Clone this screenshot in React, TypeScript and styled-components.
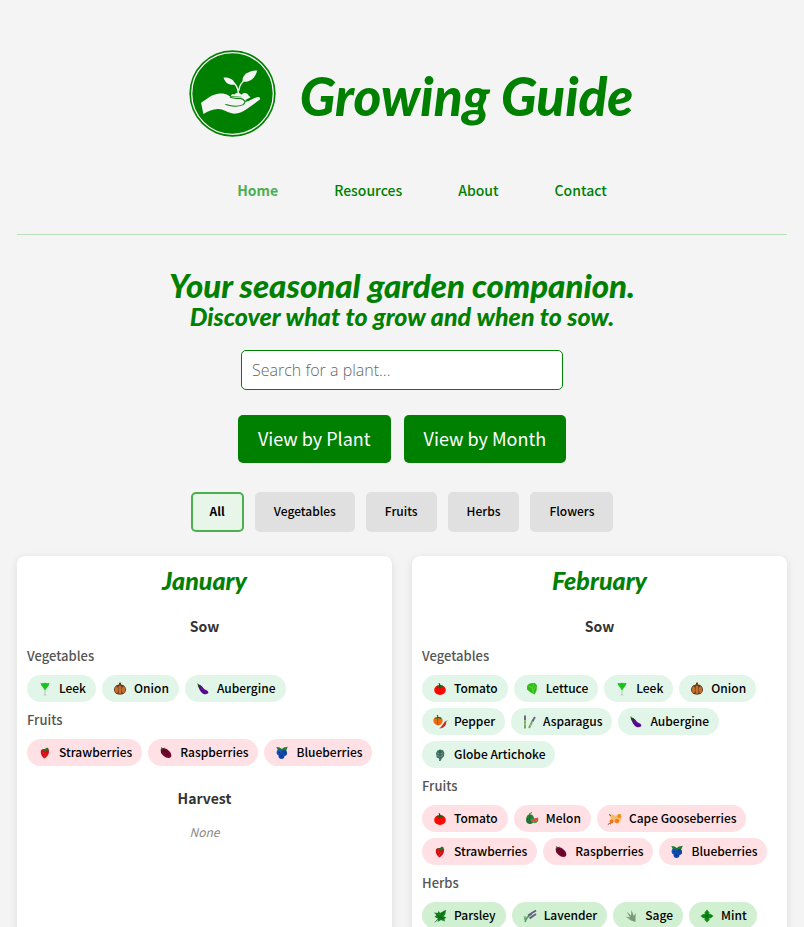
import React from 'react';
import styled, { createGlobalStyle } from 'styled-components';

const body = `'Noto Sans CJK SC', 'Noto Sans CJK JP', 'Noto Sans', sans-serif`;
const display = `Lato, 'Open Sans', sans-serif`;

const GlobalStyle = createGlobalStyle`
  *, *::before, *::after { box-sizing: border-box; }
  body { margin: 0; background: #f4f4f4; color: #000; font-family: ${body}; }
  h1, h2, h3, h4, h5, p, ul { margin: 0; padding: 0; }
`;

const Page = styled.div`
  display: flex;
  flex-direction: column;
  padding: 50px 17px 20px;
`;

const Header = styled.header`
  display: flex;
  flex-direction: column;
  align-items: center;
  border-bottom: 1px solid #b9dfba;
  padding-bottom: 33px;
`;

const Brand = styled.div`
  display: flex;
  align-items: center;
  gap: 24px;
  padding-left: 18px;
`;

const Title = styled.h1`
  font: italic 900 53px/60px ${display};
  color: #008000;
  padding-top: 4px;
`;

const NavList = styled.ul`
  display: flex;
  gap: 56px;
  list-style: none;
  margin-top: 42px;
  padding-left: 40px;
`;

const NavLink = styled.a<{ $active?: boolean }>`
  display: block;
  font-size: 14px;
  line-height: 22px;
  font-weight: ${p => (p.$active ? 700 : 500)};
  color: ${p => (p.$active ? '#4caf50' : '#008000')};
  text-decoration: none;
`;

const Intro = styled.section`
  display: flex;
  flex-direction: column;
  align-items: center;
  padding-top: 33px;
  text-align: center;
`;

const Lead = styled.h2`
  font: italic 900 33px/34px ${display};
  color: #008000;
`;

const SubLead = styled.h3`
  font: italic 900 25px/28px ${display};
  color: #008000;
`;

const Search = styled.input`
  width: 322px;
  max-width: 100%;
  height: 40px;
  margin-top: 20px;
  padding: 0 10px;
  border: 1px solid #008000;
  border-radius: 5px;
  background: #fff;
  font: 300 16px 'Open Sans', sans-serif;
  &::placeholder { color: #666; opacity: 1; }
`;

const ButtonRow = styled.div<{ $gap: number; $top: number }>`
  display: flex;
  flex-wrap: wrap;
  justify-content: center;
  gap: ${p => p.$gap}px;
  margin-top: ${p => p.$top}px;
`;

const ViewButton = styled.button`
  height: 48px;
  padding: 0 20px 2px;
  border: 0;
  border-radius: 5px;
  background: #008000;
  color: #fff;
  font: 400 18px/24px ${body};
`;

const FilterButton = styled.button<{ $active?: boolean }>`
  height: 40px;
  padding: 0 17px 2px;
  border: 2px solid ${p => (p.$active ? '#4caf50' : '#e0e0e0')};
  border-radius: 5px;
  background: ${p => (p.$active ? '#e8f5e9' : '#e0e0e0')};
  color: #000;
  font: ${p => (p.$active ? 700 : 500)} 12px/18px ${body};
`;

const Months = styled.main`
  display: grid;
  grid-template-columns: repeat(2, minmax(0, 1fr));
  gap: 20px;
  margin-top: 24px;
`;

const Card = styled.section`
  padding: 10px 10px 20px;
  border-radius: 8px;
  background: #fff;
  box-shadow: 0 2px 8px rgba(0, 0, 0, 0.1);
`;

const MonthName = styled.h2`
  font: italic 900 25px/28px ${display};
  color: #008000;
  text-align: center;
`;

const Activity = styled.h3`
  margin: 21px 0 10px;
  font-size: 14px;
  line-height: 22px;
  font-weight: 700;
  color: #333;
  text-align: center;
`;

const Category = styled.h4`
  margin: 9px 0 10px;
  ${Activity} + & { margin-top: 10px; }
  font-size: 13px;
  line-height: 18px;
  font-weight: 500;
  color: #555;
`;

const Pills = styled.ul`
  display: flex;
  flex-wrap: wrap;
  gap: 6px;
  list-style: none;
`;

const tones = { veg: '#e1f6e9', fruit: '#ffe1e5', herb: '#d1f0d2' };
type Tone = keyof typeof tones;

const Pill = styled.li<{ $tone: Tone }>`
  display: flex;
  align-items: center;
  gap: 6px;
  height: 27px;
  padding: 0 10px;
  border-radius: 14px;
  background: ${p => tones[p.$tone]};
  font-size: 12px;
  line-height: 18px;
  font-weight: 500;
  white-space: nowrap;
`;

const PillLabel = styled.span`
  padding-bottom: 2px;
`;

const Empty = styled.p`
  padding-top: 4px;
  font: italic 400 12px/18px ${body};
  color: #888;
  text-align: center;
`;

const Glyph = styled.svg`
  flex: none;
  width: 16px;
  height: 16px;
`;

const drawings: Record<string, React.ReactNode> = {
  Tomato: (
    <>
      <ellipse cx="8" cy="9" rx="5.8" ry="5" fill="#f80800" />
      <path d="M4 5l3 .2L8 3l1 2 3 .2-3 1.3-1 1.2-1.2-1.3z" fill="#245c10" />
      <path d="M8 5l-1-3" stroke="#4a3010" />
    </>
  ),
  Leek: (
    <>
      <path d="M3.500 2l2.500.3 2-.6 2 .6 2.500-.3-.8 2.500L9.300 7.500 8.800 9H7.200L6.500 7 4.300 4.600z" fill="#17c41b" />
      <path d="M7.200 8.500h1.600l-.3 5h-1z" fill="#b5dcae" />
      <path d="M7 14.500l1-1.300 1 1.300" stroke="#a9a9a9" strokeWidth=".8" fill="none" />
    </>
  ),
  Onion: (
    <>
      <path d="M7.300 1.500h1.400L9.200 3.500c3 .4 4.800 2.500 4.800 5 0 3.300-2.500 5.200-6 5.200s-6-1.900-6-5.200c0-2.500 2-4.600 4.800-5z" fill="#6b3c1d" />
      <ellipse cx="4.500" cy="8.800" rx="1.500" ry="3.300" fill="#c4712f" />
      <ellipse cx="8" cy="8.800" rx="1.500" ry="4.200" fill="#c4712f" />
      <ellipse cx="11.500" cy="8.800" rx="1.500" ry="3.300" fill="#c4712f" />
    </>
  ),
  Aubergine: (
    <>
      <path d="M4.500 4.500c2 0 3 1.200 4.200 3 1.200 1.500 4.300 1.500 4.700 4-.6 2.200-4.400 2.300-6.600.2C5 10 3.500 7 3.600 5z" fill="#5a0a8c" />
      <path d="M2.500 2l1.300 1.500 2.500.7-1.200 1-.7 2.400L3 5.500z" fill="#124e14" />
    </>
  ),
  Lettuce: (
    <>
      <path d="M3 5.500c.5-3 4-3.800 8-3.500l2 2.500-.5 5.500-2 3.500-4.500-2.500L3 8.500z" fill="#2ebd12" />
      <path d="M10 12.500L8 7 4.500 4.800M8 7l2-4M9 9.500l2.500-4" stroke="#74d94e" strokeWidth=".7" fill="none" />
    </>
  ),
  Pepper: (
    <>
      <path d="M1.500 5.500C2 3 4 3 5.500 3.500c2-1 5.300-.2 5.200 3-.1 3-2.400 5.200-5 4.700S.8 8.500 1.500 5.500z" fill="#f06c0c" />
      <path d="M6 4.500C5 7 5.500 9 6.300 11" stroke="#a13c05" strokeWidth=".8" fill="none" />
      <path d="M3.500 4.500L6 3.500l3 .8M5.900 4l-.5-3" stroke="#2d631b" strokeWidth="1.200" />
      <path d="M13 7.500l1.300 1c-.3 3-2.600 5.900-7 6 2.200-1.500 3.200-4 5.700-7z" fill="#db1c25" />
      <path d="M13.300 8.300l1.500-1.700" stroke="#225d18" />
    </>
  ),
  Asparagus: (
    <>
      <path d="M4 6v8.500M8 14l4-8" stroke="#75a35d" strokeWidth="1.900" />
      <path d="M4 1.500V6M11.300 7.500L14 3" stroke="#6f6788" strokeWidth="2" />
      <path d="M3.200 10h1.600M3.200 7h1.600M9 11l1 .5M11 8l1 .5" stroke="#cce6bb" strokeWidth=".7" />
    </>
  ),
  'Globe Artichoke': (
    <>
      <path d="M4 6l1.500-2.500L8 2.500l3 .8 1.300 2.400-.3 3.500-2.200 2.300L8.500 14H7l.3-2.200L4.700 10.500z" fill="#3b765d" />
      <path d="M5.500 6L8 7.200 10.500 6M5.500 8.500l2.500 1 2.700-1" stroke="#9792b2" strokeWidth=".9" fill="none" />
      <path d="M8 4v5.500" stroke="#4b355f" />
    </>
  ),
  Strawberries: (
    <>
      <path d="M4 5.500C5 3.600 10.500 3.500 12 5.500c.5 3-1.500 6-4.400 8C5.200 12.200 3 8.500 4 5.500z" fill="#d90b12" />
      <path d="M5 5l2 .6L8.500 7l.7-1.600 3-.2L11 3.600l1-.6-2.500-.3L8 4z" fill="#25712d" />
      <path d="M6 8h.6M8.500 9h.6M7.200 11h.6" stroke="#ffb68c" strokeWidth=".6" />
    </>
  ),
  Raspberries: (
    <>
      <path d="M3 5c1.500-2.500 5-2 7.500.5C13 7.500 14 10 13 12c-2 1.800-5 .9-7.300-1C3.400 9 2.200 7.500 3 5z" fill="#77062f" />
      <path d="M4 7l3-2M6 9l3.500-3M8 10.500L11.500 8M6 4.500L11 11" stroke="#3d0722" strokeWidth=".6" />
      <path d="M2.500 5L4 4l-.5-1.300L5 3.800 6.500 3" stroke="#35481c" fill="none" />
    </>
  ),
  Blueberries: (
    <>
      <path d="M2.300 2l3.500.5 2 1.500 2-1.500 4-.8L12 6l-7.500.8z" fill="#19802a" />
      <circle cx="5.500" cy="7.500" r="2.900" fill="#1652b8" />
      <circle cx="10.200" cy="8" r="2.900" fill="#0f449f" />
      <circle cx="7.500" cy="11" r="3" fill="#1249ae" />
      <circle cx="7.500" cy="11" r=".7" fill="#08205e" />
      <circle cx="5.300" cy="7.400" r=".6" fill="#08205e" />
    </>
  ),
  Melon: (
    <>
      <path d="M2 9c0-4 2-6 5-5.600 2 .5 3 2 3 4.600s-.7 4.700-3.500 5C4 13 2 12 2 9z" fill="#28823a" />
      <path d="M3.300 7c.1 2 .7 4 2 5.500M6 4c-1 3-.6 5 1 8M5 3l3-1.500" stroke="#195b24" strokeWidth=".8" fill="none" />
      <path d="M6.500 8.500L14 6.500c1 3-.5 5.500-3 5.700-2.500-.2-4-1.700-4.500-3.700z" fill="#46a049" />
      <path d="M7.200 8.400l6-1.500c.7 2-.7 3.700-2.300 3.900-1.700 0-3-.9-3.700-2.400z" fill="#f04444" />
    </>
  ),
  'Cape Gooseberries': (
    <>
      <path d="M2 3.500l4 .2 3 1L14 3l.8 4-2 4-5 .5L5 10l-2.500 2L4 8z" fill="#f3bd6c" />
      <circle cx="12.200" cy="5" r="2" fill="#f68b18" />
      <circle cx="4.500" cy="10.500" r="2" fill="#f46d21" />
      <circle cx="10" cy="10" r="2.200" fill="#ff791a" />
      <path d="M.8 13.500l1.700-1 1.500.5M2 3.500l2 1" stroke="#6d4a2a" strokeWidth=".9" fill="none" />
    </>
  ),
  Parsley: (
    <>
      <path d="M1.800 4.500l3.700.5 1.300-2L8 5l6-3.300-.8 5L11.500 8l3 1.800-2 1 .3 2.700L9 12l-3.500 2 .5-3.500-3.500-1.500L4.500 7z" fill="#118219" />
      <path d="M3 14.300L13 3M7 9.500l4.500.8M7 9L4 6" stroke="#0a5212" strokeWidth=".7" />
    </>
  ),
  Lavender: (
    <>
      <path d="M3 14c1-4 3-6 7-8M2.500 9.500L4 13.500" stroke="#51966a" strokeWidth="1.400" fill="none" />
      <path d="M6 7.500l8-5M7.500 10.500L14 6" stroke="#665d87" strokeWidth="1.900" />
      <path d="M1.500 8l3.500 1-2 2.500z" fill="#72b286" />
    </>
  ),
  Sage: (
    <path d="M12.500 14L8 12.500 2.500 8.500 7 9.500 3.500 3.500 8 7.500 8.500 2l2.300 6 2-3-.3 5z" fill="#7b9b78" />
  ),
  Mint: (
    <>
      <path d="M8 1.500l2.700 3.300-.6 1.200h1.700L14.500 8l-2.700 2.300h-1.600l.5 1.400L8 14.500l-2.700-2.800.5-1.400H4.200L1.500 8l2.700-2h1.700l-.6-1.200z" fill="#14951b" />
      <path d="M8 3v10M3 8h10M6 6l4 4M10 6l-4 4" stroke="#0c6012" strokeWidth=".7" />
    </>
  ),
};

const Plant = ({ name, tone }: { name: string; tone: Tone }) => (
  <Pill $tone={tone}>
    <Glyph viewBox="0 0 16 16" fill="none" aria-hidden="true">{drawings[name]}</Glyph>
    <PillLabel>{name}</PillLabel>
  </Pill>
);

const Group = ({ title, tone, plants }: { title: string; tone: Tone; plants: string[] }) => (
  <>
    <Category>{title}</Category>
    <Pills>{plants.map(name => <Plant key={name} name={name} tone={tone} />)}</Pills>
  </>
);

const LogoMark = styled.svg`
  width: 87px;
  height: 87px;
`;

const Logo = () => (
  <LogoMark viewBox="0 0 260 260" role="img" aria-label="Growing Guide">
    <circle cx="130" cy="130" r="129" fill="#008000" />
    <circle cx="130" cy="130" r="122" fill="none" stroke="#f4f4f4" strokeWidth="4" />
    <g fill="#f4f4f4">
      <path d="M36 158C55 145 69 132 91 130c20-2 26 6 36 11h29c12 1 17 7 12 14l35-14c8-2 12 3 8 8-21 15-48 38-69 41-18 3-32-11-50-13-18-2-33 6-49 14z" />
      <path d="M125 138c1-6 6-7 11-5 6-8 16-6 20 1 8-9 20-5 22 2l6 5-18 10-10-11z" />
      <path d="M103 82c18-1 31 6 36 21-20 3-30-4-36-21z" />
      <path d="M160 95c-2-21 16-33 44-34-7 23-19 36-44 34z" />
    </g>
    <path d="M136 100c9 10 12 20 12 37M149 122c1-13 4-20 13-28" fill="none" stroke="#f4f4f4" strokeWidth="4" />
    <path d="M110 163c19 6 37 6 50 1 13-6 6-18-8-19-14 0-21 1-29-4M166 154c8-1 16-5 23-9" fill="none" stroke="#008000" strokeWidth="3" strokeLinecap="round" />
  </LogoMark>
);

export default function App() {
  return (
    <>
      <GlobalStyle />
      <Page>
        <Header>
          <Brand>
            <Logo />
            <Title>Growing Guide</Title>
          </Brand>
          <nav aria-label="Main">
            <NavList>
              <li><NavLink href="#home" $active aria-current="page">Home</NavLink></li>
              <li><NavLink href="#resources">Resources</NavLink></li>
              <li><NavLink href="#about">About</NavLink></li>
              <li><NavLink href="#contact">Contact</NavLink></li>
            </NavList>
          </nav>
        </Header>
        <Intro>
          <Lead>Your seasonal garden companion.</Lead>
          <SubLead>Discover what to grow and when to sow.</SubLead>
          <Search type="search" placeholder="Search for a plant..." aria-label="Search for a plant" />
          <ButtonRow $gap={13} $top={25}>
            <ViewButton type="button">View by Plant</ViewButton>
            <ViewButton type="button">View by Month</ViewButton>
          </ButtonRow>
          <ButtonRow $gap={11} $top={29}>
            <FilterButton type="button" $active aria-pressed="true">All</FilterButton>
            {['Vegetables', 'Fruits', 'Herbs', 'Flowers'].map(label => (
              <FilterButton key={label} type="button" aria-pressed="false">{label}</FilterButton>
            ))}
          </ButtonRow>
        </Intro>
        <Months>
          <Card>
            <MonthName>January</MonthName>
            <Activity>Sow</Activity>
            <Group title="Vegetables" tone="veg" plants={['Leek', 'Onion', 'Aubergine']} />
            <Group title="Fruits" tone="fruit" plants={['Strawberries', 'Raspberries', 'Blueberries']} />
            <Activity>Harvest</Activity>
            <Empty>None</Empty>
          </Card>
          <Card>
            <MonthName>February</MonthName>
            <Activity>Sow</Activity>
            <Group
              title="Vegetables"
              tone="veg"
              plants={['Tomato', 'Lettuce', 'Leek', 'Onion', 'Pepper', 'Asparagus', 'Aubergine', 'Globe Artichoke']}
            />
            <Group
              title="Fruits"
              tone="fruit"
              plants={['Tomato', 'Melon', 'Cape Gooseberries', 'Strawberries', 'Raspberries', 'Blueberries']}
            />
            <Group title="Herbs" tone="herb" plants={['Parsley', 'Lavender', 'Sage', 'Mint']} />
          </Card>
        </Months>
      </Page>
    </>
  );
}
